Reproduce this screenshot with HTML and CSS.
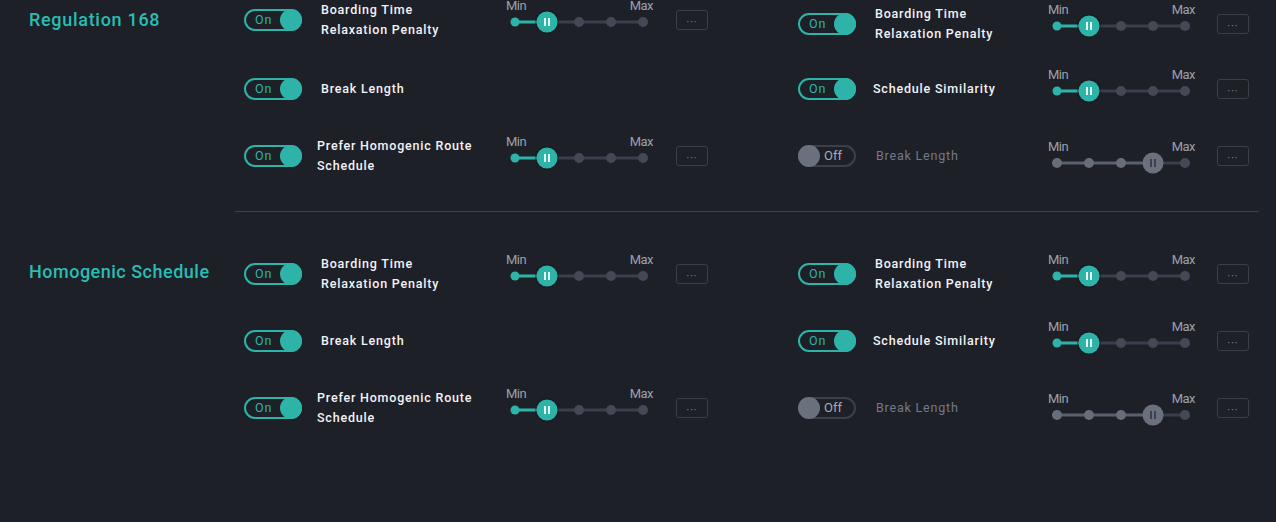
FILE: index.html
```html
<!DOCTYPE html>
<html>
<head>
<meta charset="utf-8">
<link rel="stylesheet" href="styles.css">
</head>
<body>
<div class="page">
  <section class="section first">
    <div class="side"><h2 class="title">Regulation 168</h2></div>
    <div class="grid">
      <div class="cell left">
        <div class="toggle on"><span class="ttext">On</span><span class="knob"></span></div>
        <div class="label">Boarding Time<br>Relaxation Penalty</div>
        <div class="slider"><div class="ends"><span>Min</span><span>Max</span></div>
          <svg class="track" width="148" height="22" viewBox="0 0 148 22"><line x1="10" y1="11" x2="42" y2="11" stroke="#2db3a8" stroke-width="3"/><line x1="42" y1="11" x2="138" y2="11" stroke="#3a3f4a" stroke-width="3"/><circle cx="10" cy="11" r="4.5" fill="#2db3a8"/><circle cx="74" cy="11" r="5" fill="#444955"/><circle cx="106" cy="11" r="5" fill="#444955"/><circle cx="138" cy="11" r="5" fill="#444955"/><circle cx="42" cy="11" r="12" fill="#14161b" opacity="0.45"/><circle cx="42" cy="11" r="10.5" fill="#2db3a8"/><rect x="39" y="7" width="2" height="8" fill="#e8f7f5"/><rect x="43" y="7" width="2" height="8" fill="#e8f7f5"/></svg>
        </div>
        <div class="more">···</div>
      </div>
      <div class="cell right nudge">
        <div class="toggle on"><span class="ttext">On</span><span class="knob"></span></div>
        <div class="label">Boarding Time<br>Relaxation Penalty</div>
        <div class="slider"><div class="ends"><span>Min</span><span>Max</span></div>
          <svg class="track" width="148" height="22" viewBox="0 0 148 22"><line x1="10" y1="11" x2="42" y2="11" stroke="#2db3a8" stroke-width="3"/><line x1="42" y1="11" x2="138" y2="11" stroke="#3a3f4a" stroke-width="3"/><circle cx="10" cy="11" r="4.5" fill="#2db3a8"/><circle cx="74" cy="11" r="5" fill="#444955"/><circle cx="106" cy="11" r="5" fill="#444955"/><circle cx="138" cy="11" r="5" fill="#444955"/><circle cx="42" cy="11" r="12" fill="#14161b" opacity="0.45"/><circle cx="42" cy="11" r="10.5" fill="#2db3a8"/><rect x="39" y="7" width="2" height="8" fill="#e8f7f5"/><rect x="43" y="7" width="2" height="8" fill="#e8f7f5"/></svg>
        </div>
        <div class="more">···</div>
      </div>

      <div class="cell left">
        <div class="toggle on"><span class="ttext">On</span><span class="knob"></span></div>
        <div class="label">Break Length</div>
      </div>
      <div class="cell right">
        <div class="toggle on"><span class="ttext">On</span><span class="knob"></span></div>
        <div class="label tight2">Schedule Similarity</div>
        <div class="slider"><div class="ends"><span>Min</span><span>Max</span></div>
          <svg class="track" width="148" height="22" viewBox="0 0 148 22"><line x1="10" y1="11" x2="42" y2="11" stroke="#2db3a8" stroke-width="3"/><line x1="42" y1="11" x2="138" y2="11" stroke="#3a3f4a" stroke-width="3"/><circle cx="10" cy="11" r="4.5" fill="#2db3a8"/><circle cx="74" cy="11" r="5" fill="#444955"/><circle cx="106" cy="11" r="5" fill="#444955"/><circle cx="138" cy="11" r="5" fill="#444955"/><circle cx="42" cy="11" r="12" fill="#14161b" opacity="0.45"/><circle cx="42" cy="11" r="10.5" fill="#2db3a8"/><rect x="39" y="7" width="2" height="8" fill="#e8f7f5"/><rect x="43" y="7" width="2" height="8" fill="#e8f7f5"/></svg>
        </div>
        <div class="more">···</div>
      </div>

      <div class="cell left">
        <div class="toggle on"><span class="ttext">On</span><span class="knob"></span></div>
        <div class="label tight">Prefer Homogenic Route<br>Schedule</div>
        <div class="slider"><div class="ends"><span>Min</span><span>Max</span></div>
          <svg class="track" width="148" height="22" viewBox="0 0 148 22"><line x1="10" y1="11" x2="42" y2="11" stroke="#2db3a8" stroke-width="3"/><line x1="42" y1="11" x2="138" y2="11" stroke="#3a3f4a" stroke-width="3"/><circle cx="10" cy="11" r="4.5" fill="#2db3a8"/><circle cx="74" cy="11" r="5" fill="#444955"/><circle cx="106" cy="11" r="5" fill="#444955"/><circle cx="138" cy="11" r="5" fill="#444955"/><circle cx="42" cy="11" r="12" fill="#14161b" opacity="0.45"/><circle cx="42" cy="11" r="10.5" fill="#2db3a8"/><rect x="39" y="7" width="2" height="8" fill="#e8f7f5"/><rect x="43" y="7" width="2" height="8" fill="#e8f7f5"/></svg>
        </div>
        <div class="more">···</div>
      </div>
      <div class="cell right">
        <div class="toggle off"><span class="knob"></span><span class="ttext">Off</span></div>
        <div class="label dim">Break Length</div>
        <div class="slider low"><div class="ends"><span>Min</span><span>Max</span></div>
          <svg class="track" width="148" height="22" viewBox="0 0 148 22"><line x1="10" y1="11" x2="106" y2="11" stroke="#5b616c" stroke-width="3"/><line x1="106" y1="11" x2="138" y2="11" stroke="#3a3f4a" stroke-width="3"/><circle cx="10" cy="11" r="5" fill="#686e79"/><circle cx="42" cy="11" r="5" fill="#686e79"/><circle cx="74" cy="11" r="5" fill="#686e79"/><circle cx="138" cy="11" r="5" fill="#444955"/><circle cx="106" cy="11" r="10.5" fill="#6b717c"/><rect x="103" y="7" width="2" height="8" fill="#3c414b"/><rect x="107" y="7" width="2" height="8" fill="#3c414b"/></svg>
        </div>
        <div class="more">···</div>
      </div>
    </div>
  </section>

  <hr class="divider">

  <section class="section second">
    <div class="side"><h2 class="title">Homogenic Schedule</h2></div>
    <div class="grid">
      <div class="cell left">
        <div class="toggle on"><span class="ttext">On</span><span class="knob"></span></div>
        <div class="label">Boarding Time<br>Relaxation Penalty</div>
        <div class="slider"><div class="ends"><span>Min</span><span>Max</span></div>
          <svg class="track" width="148" height="22" viewBox="0 0 148 22"><line x1="10" y1="11" x2="42" y2="11" stroke="#2db3a8" stroke-width="3"/><line x1="42" y1="11" x2="138" y2="11" stroke="#3a3f4a" stroke-width="3"/><circle cx="10" cy="11" r="4.5" fill="#2db3a8"/><circle cx="74" cy="11" r="5" fill="#444955"/><circle cx="106" cy="11" r="5" fill="#444955"/><circle cx="138" cy="11" r="5" fill="#444955"/><circle cx="42" cy="11" r="12" fill="#14161b" opacity="0.45"/><circle cx="42" cy="11" r="10.5" fill="#2db3a8"/><rect x="39" y="7" width="2" height="8" fill="#e8f7f5"/><rect x="43" y="7" width="2" height="8" fill="#e8f7f5"/></svg>
        </div>
        <div class="more">···</div>
      </div>
      <div class="cell right">
        <div class="toggle on"><span class="ttext">On</span><span class="knob"></span></div>
        <div class="label">Boarding Time<br>Relaxation Penalty</div>
        <div class="slider"><div class="ends"><span>Min</span><span>Max</span></div>
          <svg class="track" width="148" height="22" viewBox="0 0 148 22"><line x1="10" y1="11" x2="42" y2="11" stroke="#2db3a8" stroke-width="3"/><line x1="42" y1="11" x2="138" y2="11" stroke="#3a3f4a" stroke-width="3"/><circle cx="10" cy="11" r="4.5" fill="#2db3a8"/><circle cx="74" cy="11" r="5" fill="#444955"/><circle cx="106" cy="11" r="5" fill="#444955"/><circle cx="138" cy="11" r="5" fill="#444955"/><circle cx="42" cy="11" r="12" fill="#14161b" opacity="0.45"/><circle cx="42" cy="11" r="10.5" fill="#2db3a8"/><rect x="39" y="7" width="2" height="8" fill="#e8f7f5"/><rect x="43" y="7" width="2" height="8" fill="#e8f7f5"/></svg>
        </div>
        <div class="more">···</div>
      </div>

      <div class="cell left">
        <div class="toggle on"><span class="ttext">On</span><span class="knob"></span></div>
        <div class="label">Break Length</div>
      </div>
      <div class="cell right">
        <div class="toggle on"><span class="ttext">On</span><span class="knob"></span></div>
        <div class="label tight2">Schedule Similarity</div>
        <div class="slider"><div class="ends"><span>Min</span><span>Max</span></div>
          <svg class="track" width="148" height="22" viewBox="0 0 148 22"><line x1="10" y1="11" x2="42" y2="11" stroke="#2db3a8" stroke-width="3"/><line x1="42" y1="11" x2="138" y2="11" stroke="#3a3f4a" stroke-width="3"/><circle cx="10" cy="11" r="4.5" fill="#2db3a8"/><circle cx="74" cy="11" r="5" fill="#444955"/><circle cx="106" cy="11" r="5" fill="#444955"/><circle cx="138" cy="11" r="5" fill="#444955"/><circle cx="42" cy="11" r="12" fill="#14161b" opacity="0.45"/><circle cx="42" cy="11" r="10.5" fill="#2db3a8"/><rect x="39" y="7" width="2" height="8" fill="#e8f7f5"/><rect x="43" y="7" width="2" height="8" fill="#e8f7f5"/></svg>
        </div>
        <div class="more">···</div>
      </div>

      <div class="cell left">
        <div class="toggle on"><span class="ttext">On</span><span class="knob"></span></div>
        <div class="label tight">Prefer Homogenic Route<br>Schedule</div>
        <div class="slider"><div class="ends"><span>Min</span><span>Max</span></div>
          <svg class="track" width="148" height="22" viewBox="0 0 148 22"><line x1="10" y1="11" x2="42" y2="11" stroke="#2db3a8" stroke-width="3"/><line x1="42" y1="11" x2="138" y2="11" stroke="#3a3f4a" stroke-width="3"/><circle cx="10" cy="11" r="4.5" fill="#2db3a8"/><circle cx="74" cy="11" r="5" fill="#444955"/><circle cx="106" cy="11" r="5" fill="#444955"/><circle cx="138" cy="11" r="5" fill="#444955"/><circle cx="42" cy="11" r="12" fill="#14161b" opacity="0.45"/><circle cx="42" cy="11" r="10.5" fill="#2db3a8"/><rect x="39" y="7" width="2" height="8" fill="#e8f7f5"/><rect x="43" y="7" width="2" height="8" fill="#e8f7f5"/></svg>
        </div>
        <div class="more">···</div>
      </div>
      <div class="cell right">
        <div class="toggle off"><span class="knob"></span><span class="ttext">Off</span></div>
        <div class="label dim">Break Length</div>
        <div class="slider low"><div class="ends"><span>Min</span><span>Max</span></div>
          <svg class="track" width="148" height="22" viewBox="0 0 148 22"><line x1="10" y1="11" x2="106" y2="11" stroke="#5b616c" stroke-width="3"/><line x1="106" y1="11" x2="138" y2="11" stroke="#3a3f4a" stroke-width="3"/><circle cx="10" cy="11" r="5" fill="#686e79"/><circle cx="42" cy="11" r="5" fill="#686e79"/><circle cx="74" cy="11" r="5" fill="#686e79"/><circle cx="138" cy="11" r="5" fill="#444955"/><circle cx="106" cy="11" r="10.5" fill="#6b717c"/><rect x="103" y="7" width="2" height="8" fill="#3c414b"/><rect x="107" y="7" width="2" height="8" fill="#3c414b"/></svg>
        </div>
        <div class="more">···</div>
      </div>
    </div>
  </section>
</div>
</body>
</html>
```

FILE: styles.css
```css
* { box-sizing: border-box; }
html, body { margin: 0; padding: 0; }
body {
  background: #1e2028;
  width: 1276px;
  height: 522px;
  overflow: hidden;
  font-family: Roboto, "Liberation Sans", sans-serif;
  color: #f2f3f5;
}
.page { display: flex; flex-direction: column; }
.section { display: flex; }
.section.first { margin-top: -4px; }
.section.second { padding-top: 40px; }
.side { width: 235px; padding-left: 29px; }
.title {
  margin: 0;
  font-size: 18px;
  font-weight: 500;
  line-height: 48px;
  letter-spacing: 0.7px;
  color: #27beb4;
}
.section.second .title { line-height: 40px; letter-spacing: 0.5px; }
.grid {
  display: grid;
  grid-template-columns: 554px 1fr;
  grid-auto-rows: 44px;
  row-gap: 23px;
  padding-left: 9px;
}
.section.first .grid { grid-template-rows: 48px 44px 44px; }
.cell { display: flex; align-items: center; }
.cell.nudge { padding-top: 8px; }
.toggle {
  width: 58px;
  height: 22px;
  border: 2px solid #2db3a8;
  border-radius: 11px;
  display: flex;
  align-items: center;
  justify-content: space-between;
  flex-shrink: 0;
}
.knob {
  width: 22px;
  height: 22px;
  border-radius: 50%;
  background: #2db3a8;
  margin: -2px;
}
.ttext {
  font-size: 12.5px;
  letter-spacing: 0.8px;
  line-height: 18px;
  color: #2db3a8;
  padding-left: 9px;
}
.toggle.off { border-color: #3a3f4a; }
.toggle.off .knob { background: #6b717c; }
.toggle.off .ttext { color: #a6acb4; padding-left: 0; padding-right: 12px; font-size: 13px; letter-spacing: 0; }
.label {
  margin-left: 19px;
  width: 184px;
  font-size: 12.5px;
  font-weight: 500;
  letter-spacing: 0.8px;
  line-height: 20px;
}
.cell.right .label { width: 172px; }
.label.tight { margin-left: 15px; width: 188px; }
.cell.right .label.tight2 { margin-left: 17px; width: 174px; }
.label.dim { color: #737a85; margin-left: 20px; width: 171px; font-weight: 400; }
.cell.right .label.dim { width: 171px; }
.slider {
  width: 148px;
  flex-shrink: 0;
  margin-bottom: 6px;
}
.slider.low { margin-bottom: 0; margin-top: 4px; }
.ends {
  display: flex;
  justify-content: space-between;
  padding-left: 1px;
  font-size: 13px;
  line-height: 10px;
  letter-spacing: -0.5px;
  color: #9ba1ab;
}
.track { display: block; overflow: visible; }
.more {
  margin-left: 23px;
  width: 32px;
  height: 20px;
  border: 1px solid #3a3e48;
  border-radius: 3px;
  color: #8d939c;
  font-size: 10px;
  line-height: 24px;
  letter-spacing: 1px;
  text-align: center;
  overflow: hidden;
  flex-shrink: 0;
}
.cell.right .more { margin-left: 22px; }
.divider {
  margin: 33px 17px 0 235px;
  border: 0;
  height: 1px;
  background: #3d414b;
}
```
